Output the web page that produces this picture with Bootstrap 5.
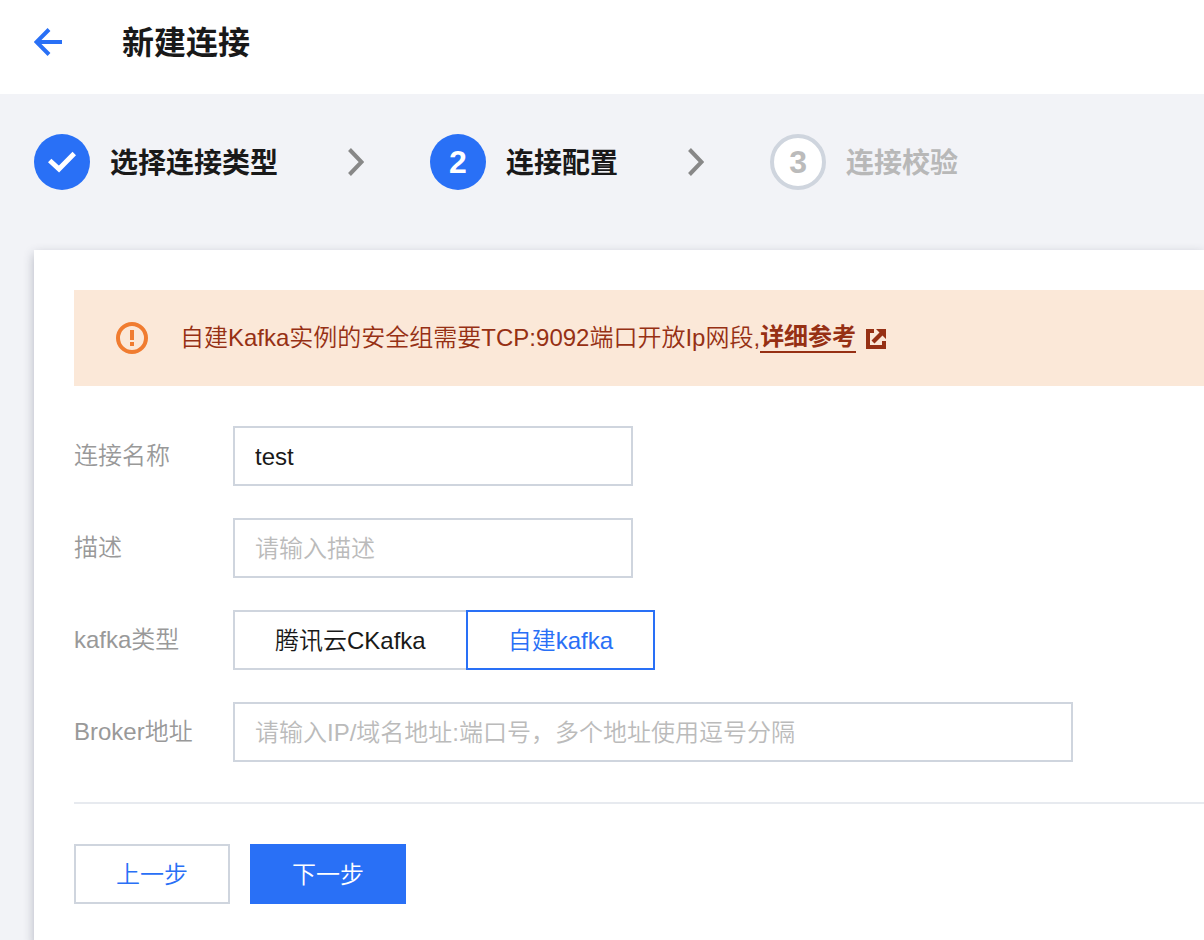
<!DOCTYPE html>
<html lang="zh-CN">
<head>
<meta charset="utf-8">
<meta name="viewport" content="width=device-width, initial-scale=1">
<title>新建连接</title>
<link href="https://cdn.jsdelivr.net/npm/bootstrap@5.3.0/dist/css/bootstrap.min.css" rel="stylesheet">
<style>
  :root { --brand: #2970f6; --line: #cfd5de; --ink: #191919; --warn: #963014; }
  body {
    font: 350 24px/36px "Liberation Sans", "Noto Sans CJK SC", sans-serif;
    color: var(--ink);
    background: #f2f3f7;
  }
  svg { display: block; flex: none; }
  .page-head { padding: 18px 34px 28px; gap: 60px; }
  .page-head h1 { font-size: 32px; line-height: 46px; padding-top: 2px; font-weight: 700; }
  .steps { padding: 40px 34px 60px; }
  .step-item { gap: 20px; font-size: 28px; line-height: 40px; font-weight: 700; }
  .step-dot { width: 56px; height: 56px; font-size: 32px; background: var(--brand); color: #fff; flex: none; }
  .step-item.todo { color: #b8b8b8; }
  .todo .step-dot { background: #fff; color: #bbb; border: 4px solid var(--line); }
  .step-sep { margin: 0 66px 0 70px; }
  .panel { margin-left: 34px; padding: 40px 0 40px 40px; box-shadow: 0 4px 10px rgba(54, 58, 80, .32); }
  .notice { padding: 30px 40px; gap: 30px; background: #fbe8d8; color: var(--warn); }
  .notice a { color: var(--warn); font-weight: 700; text-decoration: none; }
  .notice a span { border-bottom: 2px solid var(--warn); line-height: 28px; display: inline-block; }
  .fields { padding: 40px 40px 40px 0; gap: 32px; }
  .field-name { width: 159px; flex: none; color: #999; }
  .panel .form-control {
    height: 60px; padding: 2px 20px 0; font-size: 24px; font-weight: 350;
    border: 2px solid var(--line); border-radius: 0; color: var(--ink);
  }
  .panel .form-control::placeholder { color: #bbb; }
  .w-short { max-width: 400px; }
  .w-long { max-width: 840px; }
  .panel .btn {
    --bs-btn-font-size: 24px; --bs-btn-line-height: 36px; --bs-btn-font-weight: 350;
    --bs-btn-padding-x: 40px; --bs-btn-padding-y: 10px;
    --bs-btn-border-width: 2px; --bs-btn-border-radius: 0;
    --bs-btn-border-color: var(--line); --bs-btn-color: var(--ink); --bs-btn-bg: #fff;
    --bs-btn-active-color: var(--brand); --bs-btn-active-bg: #fff; --bs-btn-active-border-color: var(--brand);
    padding-top: 11px; padding-bottom: 9px;
  }
  .panel .btn-group > .btn + .btn-check + .btn { margin-left: -2px; }
  .panel .btn-back { --bs-btn-color: var(--brand); }
  .panel .btn-next { --bs-btn-color: #fff; --bs-btn-bg: var(--brand); --bs-btn-border-color: var(--brand); }
  .actions { border-top: 2px solid #e7eaef; padding-top: 40px; gap: 20px; }
</style>
</head>
<body>
<header class="page-head bg-white d-flex align-items-center">
  <a href="#" aria-label="返回">
    <svg width="28" height="28" viewBox="0 0 28 28" fill="none" stroke="#2970f6" stroke-width="4"><path d="M15 1.500 2.500 14 15 26.500M3 14h25"/></svg>
  </a>
  <h1 class="mb-0">新建连接</h1>
</header>

<ol class="steps list-unstyled d-flex align-items-center m-0">
  <li class="step-item d-flex align-items-center text-nowrap">
    <span class="step-dot rounded-circle d-flex align-items-center justify-content-center">
      <svg width="28" height="22" viewBox="0 0 28 22" fill="none" stroke="#fff" stroke-width="5"><path d="M1.700 9.500 11 18 26.300 2.500"/></svg>
    </span><span class="pt-1">选择连接类型</span>
  </li>
  <li class="step-sep" aria-hidden="true">
    <svg width="16" height="28" viewBox="0 0 16 28" fill="none" stroke="#888" stroke-width="4"><path d="M1.500 1.500 13.500 14 1.500 26.500"/></svg>
  </li>
  <li class="step-item d-flex align-items-center text-nowrap" aria-current="step">
    <span class="step-dot rounded-circle d-flex align-items-center justify-content-center">2</span><span class="pt-1">连接配置</span>
  </li>
  <li class="step-sep" aria-hidden="true">
    <svg width="16" height="28" viewBox="0 0 16 28" fill="none" stroke="#888" stroke-width="4"><path d="M1.500 1.500 13.500 14 1.500 26.500"/></svg>
  </li>
  <li class="step-item todo d-flex align-items-center text-nowrap">
    <span class="step-dot rounded-circle d-flex align-items-center justify-content-center">3</span><span class="pt-1">连接校验</span>
  </li>
</ol>

<main class="panel bg-white">
  <div class="notice d-flex align-items-center" role="alert">
    <svg width="36" height="36" viewBox="0 0 36 36"><circle cx="18" cy="18" r="14" fill="none" stroke="#f07c30" stroke-width="4"/><path fill="#f07c30" d="M16 10h4v10h-4zM16 22h4v4h-4z"/></svg>
    <div class="d-flex align-items-center flex-wrap">
      <span>自建Kafka实例的安全组需要TCP:9092端口开放Ip网段,</span>
      <a href="#" class="d-flex align-items-center"><span>详细参考</span>
        <svg class="ms-2" width="24" height="24" viewBox="0 0 24 24" fill="#963014"><path d="M2 3h8v4H6v12h12v-4h4v8H2zM12 3h10v10l-3.500-3.500-8 8-3-3 8-8z"/></svg>
      </a>
    </div>
  </div>

  <form>
    <div class="fields d-flex flex-column">
      <div class="d-flex align-items-center">
        <label class="field-name" for="name">连接名称</label>
        <input class="form-control w-short" id="name" type="text" value="test">
      </div>
      <div class="d-flex align-items-center">
        <label class="field-name" for="desc">描述</label>
        <input class="form-control w-short" id="desc" type="text" placeholder="请输入描述">
      </div>
      <div class="d-flex align-items-center">
        <span class="field-name" id="kind-label">kafka类型</span>
        <div class="btn-group" role="radiogroup" aria-labelledby="kind-label">
          <input class="btn-check" type="radio" name="kind" id="kind-cloud">
          <label class="btn" for="kind-cloud">腾讯云CKafka</label>
          <input class="btn-check" type="radio" name="kind" id="kind-self" checked>
          <label class="btn" for="kind-self">自建kafka</label>
        </div>
      </div>
      <div class="d-flex align-items-center">
        <label class="field-name" for="broker">Broker地址</label>
        <input class="form-control w-long" id="broker" type="text" placeholder="请输入IP/域名地址:端口号，多个地址使用逗号分隔">
      </div>
    </div>
    <div class="actions d-flex">
      <button class="btn btn-back" type="button">上一步</button>
      <button class="btn btn-next" type="submit">下一步</button>
    </div>
  </form>
</main>
<script src="https://cdn.jsdelivr.net/npm/bootstrap@5.3.0/dist/js/bootstrap.bundle.min.js"></script>
</body>
</html>
